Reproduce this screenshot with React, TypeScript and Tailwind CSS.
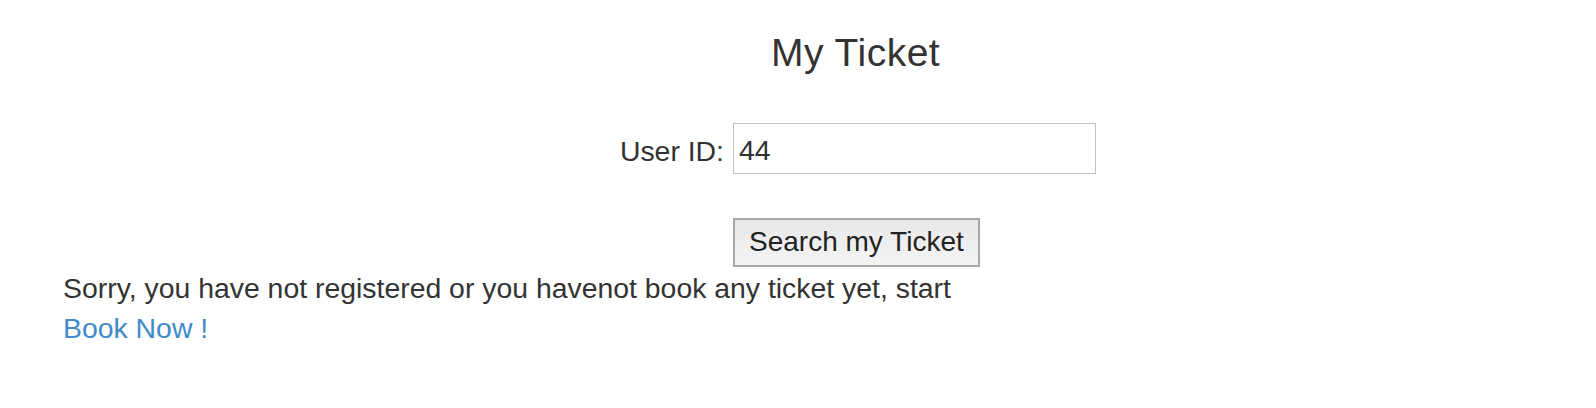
import React from "react";

const App: React.FC = (): JSX.Element => {
	const [userId, setUserId] = React.useState<string>("44");

	return (
		<div className="min-h-[408px] bg-white pl-[63px] font-['Liberation_Sans',Arial,sans-serif] text-[28.4px] leading-[40px] text-[#333333]">
			<h2 className="ml-[708px] pt-[32px] text-[39px] font-normal leading-[1.1] tracking-[0.5px]">My Ticket</h2>

			<form className="mt-[48px]" onSubmit={(e) => e.preventDefault()}>
				<div className="flex items-start">
					<label htmlFor="user-id" className="w-[670px] pr-[9px] pt-[8px] text-right">
						User ID:
					</label>
					<input
						id="user-id"
						type="text"
						value={userId}
						onChange={(e) => setUserId(e.target.value)}
						className="h-[51px] w-[363px] border border-[#c3c3c3] bg-white px-[5px] pt-[5px] text-[28.4px] leading-[40px] text-[#333333] outline-none"
					/>
				</div>

				<div className="mt-[44px] pl-[670px]">
					<button
						type="submit"
						className="h-[49px] border-2 border-[#a8a8a8] bg-gradient-to-b from-[#e8e8e8] to-[#f4f4f4] px-[14px] text-[28px] leading-[40px] text-[#222222]"
					>
						Search my Ticket
					</button>
				</div>
			</form>

			<div className="mt-[1px]">
				<p>Sorry, you have not registered or you havenot book any ticket yet, start</p>
				<a href="#" className="text-[#428bca]">
					Book Now !
				</a>
			</div>
		</div>
	);
};

export default App;
